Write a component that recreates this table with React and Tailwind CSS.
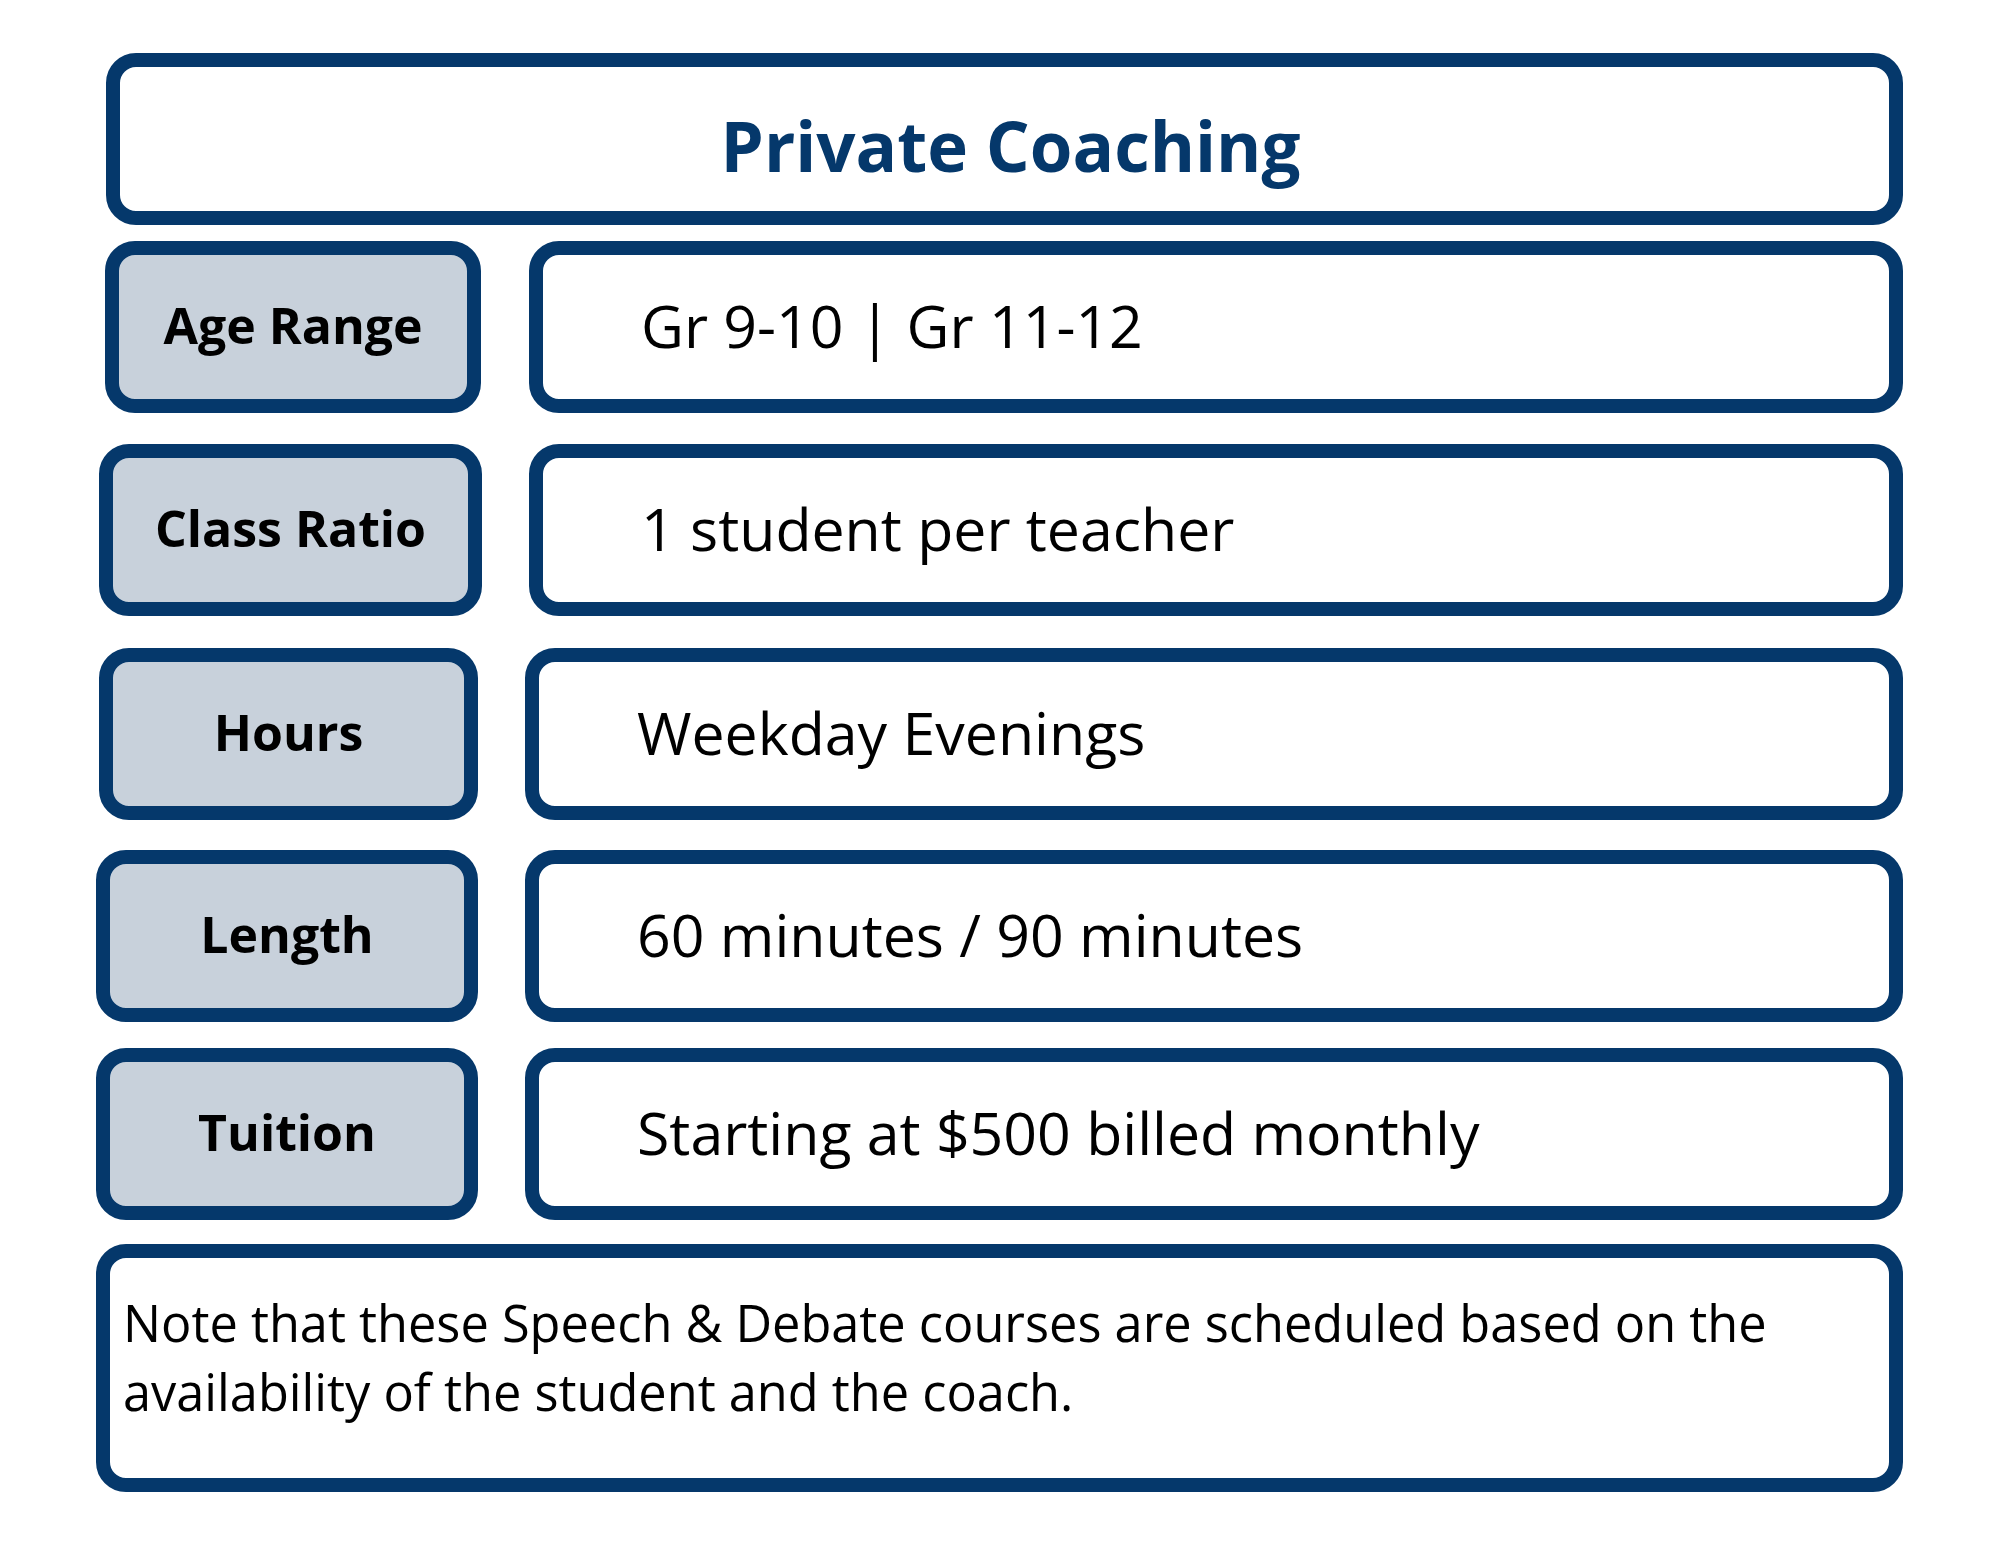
import React from 'react'

const rows = [
  { label: 'Age Range', value: 'Gr 9-10 | Gr 11-12', row: 'mt-[16px] pl-[105px]', labelW: 'w-[376px]', gap: 'ml-[48px]' },
  { label: 'Class Ratio', value: '1 student per teacher', row: 'mt-[31px] pl-[99px]', labelW: 'w-[383px]', gap: 'ml-[47px]' },
  { label: 'Hours', value: 'Weekday Evenings', row: 'mt-[32px] pl-[99px]', labelW: 'w-[379px]', gap: 'ml-[47px]' },
  { label: 'Length', value: '60 minutes / 90 minutes', row: 'mt-[30px] pl-[96px]', labelW: 'w-[382px]', gap: 'ml-[47px]' },
  { label: 'Tuition', value: 'Starting at $500 billed monthly', row: 'mt-[26px] pl-[96px]', labelW: 'w-[382px]', gap: 'ml-[47px]' },
]

export default function App(){
  return (
    <div className="w-[2000px] h-[1545px] bg-white pr-[97px] pt-[53px] font-['Open_Sans',sans-serif]">
      <div className="ml-[106px] h-[172px] border-[14px] border-[#05386b] rounded-[30px] flex items-center justify-center">
        <div className="text-[69px] font-bold text-[#05386b] leading-none pt-[12px] pl-[12px]">Private Coaching</div>
      </div>

      {rows.map(r => (
        <div key={r.label} className={`flex h-[172px] ${r.row}`}>
          <div className={`${r.labelW} shrink-0 border-[14px] border-[#05386b] rounded-[30px] bg-[#c8d1db] flex items-center justify-center pb-[4px]`}>
            <span className="text-[50px] font-bold text-black leading-none">{r.label}</span>
          </div>
          <div className={`${r.gap} flex-1 border-[14px] border-[#05386b] rounded-[30px] bg-white flex items-center pl-[98px] pb-[3px]`}>
            <span className="text-[59px] text-black leading-none">{r.value}</span>
          </div>
        </div>
      ))}

      <div className="mt-[24px] ml-[96px] h-[248px] border-[14px] border-[#05386b] rounded-[30px] bg-white pl-[13px] pt-[30px]">
        <p className="text-[50.5px] leading-[69px] text-black">
          Note that these Speech &amp; Debate courses are scheduled based on the availability of the student and the coach.
        </p>
      </div>
    </div>
  )
}
